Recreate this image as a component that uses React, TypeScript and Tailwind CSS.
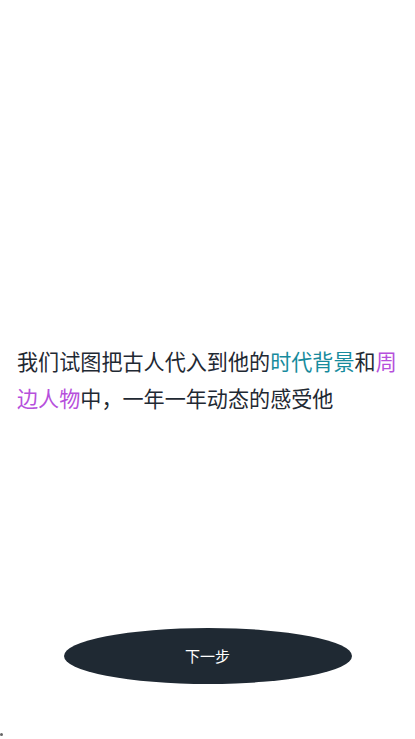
export default function App() {
  return (
    <div
      className="relative flex h-[739px] w-full flex-col bg-white"
      style={{ fontFamily: '"Noto Sans CJK SC", "Noto Sans", sans-serif' }}
    >
      {/* Intro text */}
      <div className="flex flex-1 items-center px-[17px] pt-[132px]">
        <p className="text-[21.1px] leading-[37px] text-[#1f2933]">
          我们试图把古人代入到他的
          <span className="text-[#178b9d]">时代背景</span>
          和
          <span className="text-[#b650dc]">周边人物</span>
          中，一年一年动态的感受他
        </p>
      </div>

      {/* Next button */}
      <div className="flex justify-center pb-[55px]">
        <button className="flex h-[56px] w-[288px] items-center justify-center rounded-[50%] bg-[#1f2933] text-[15px] text-white">
          下一步
        </button>
      </div>

      <span className="absolute bottom-[3px] left-0 h-[3px] w-[3px] rounded-full bg-[#666]" />
    </div>
  );
}
